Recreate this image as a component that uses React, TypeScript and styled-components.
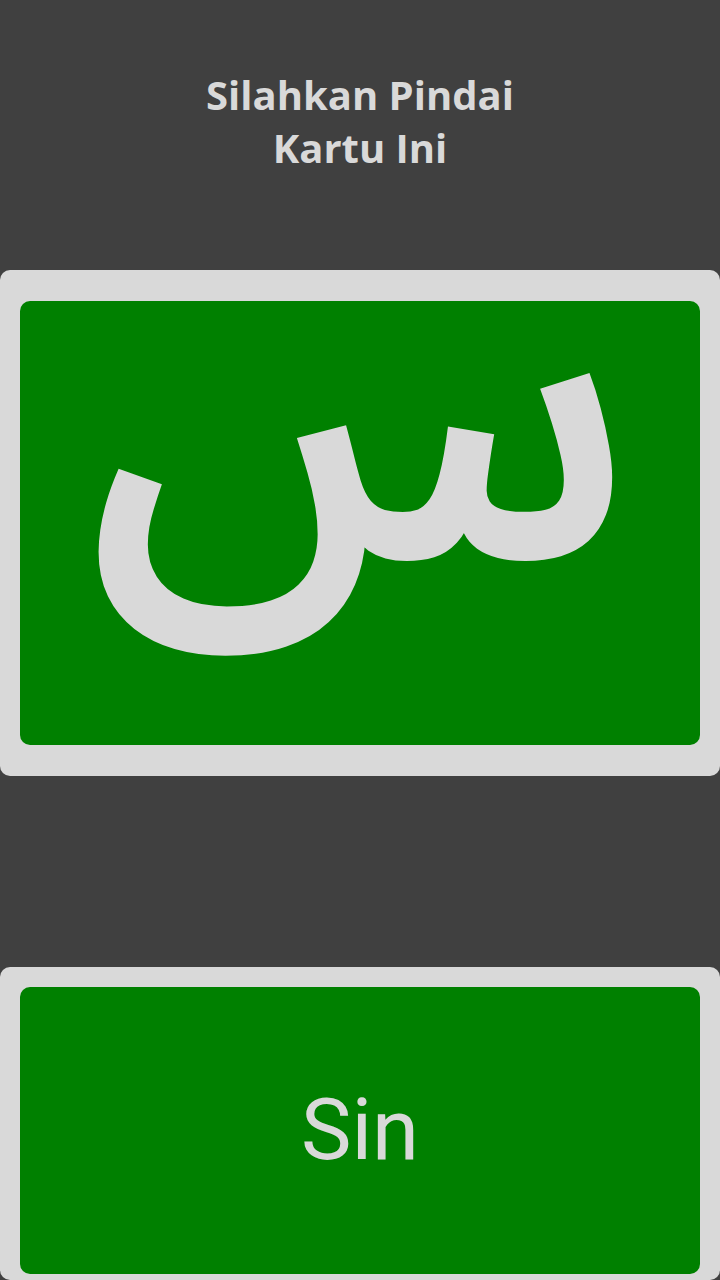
import React from "react";
import styled, { createGlobalStyle } from "styled-components";

const Global = createGlobalStyle`
  html, body { margin: 0; padding: 0; background: #404040; }
  body { width: 720px; height: 1280px; overflow: hidden; }
`;

const Screen = styled.div`
  width: 720px;
  height: 1280px;
  background: #404040;
  display: flex;
  flex-direction: column;
  overflow: hidden;
`;

const Header = styled.div`
  height: 270px;
  box-sizing: border-box;
  padding-top: 68px;
  display: flex;
  justify-content: center;
`;

const Title = styled.h1`
  margin: 0;
  font-family: "Open Sans", sans-serif;
  font-weight: 700;
  font-size: 40px;
  line-height: 53px;
  color: #d9d9d9;
  text-align: center;
`;

const Card = styled.div<{ $padTop: number; $padBottom: number; $height: number }>`
  box-sizing: border-box;
  flex-shrink: 0;
  height: ${(p) => p.$height}px;
  background: #d9d9d9;
  border-radius: 10px;
  padding: ${(p) => p.$padTop}px 20px ${(p) => p.$padBottom}px;
  display: flex;
`;

const Face = styled.div`
  flex: 1;
  background: #008000;
  border-radius: 10px;
  display: flex;
  align-items: center;
  justify-content: center;
  color: #d9d9d9;
  overflow: hidden;
`;

const Letter = styled.span`
  font-family: "Noto Sans Arabic", "DejaVu Sans", sans-serif;
  font-weight: 600;
  font-size: 417px;
  line-height: 1;
  transform: translateY(-97px);
`;

const Name = styled.span`
  font-family: Roboto, sans-serif;
  font-size: 85px;
  line-height: 1;
`;

const Spacer = styled.div`
  height: 191px;
  flex-shrink: 0;
`;

export default function App() {
  return (
    <Screen>
      <Global />
      <Header>
        <Title>
          Silahkan Pindai
          <br />
          Kartu Ini
        </Title>
      </Header>
      <Card $padTop={31} $padBottom={31} $height={506}>
        <Face>
          <Letter lang="ar">س</Letter>
        </Face>
      </Card>
      <Spacer />
      <Card $padTop={20} $padBottom={6} $height={313}>
        <Face>
          <Name>Sin</Name>
        </Face>
      </Card>
    </Screen>
  );
}
